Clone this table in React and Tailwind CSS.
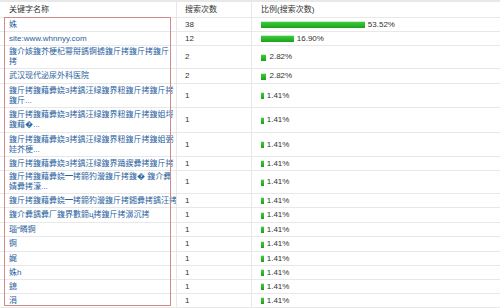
import React from "react";

const rows = [
  { h: 14, lines: ["姝"], count: 38, pct: 53.52 },
  { h: 14, lines: ["site:www.whnnyy.com"], count: 12, pct: 16.9 },
  { h: 23, lines: ["鍑介姟鍑芥梗杞幂搿鎷锕掳鍑斤拷鍑斤拷鍑斤", "拷"], count: 2, pct: 2.82 },
  { h: 15, lines: ["武汉现代泌尿外科医院"], count: 2, pct: 2.82 },
  { h: 24, lines: ["鍑斤拷鍑藉彛娆3拷鍝汪绿鍑界粈鍑斤拷鍑斤拷", "鍑斤..."], count: 1, pct: 1.41 },
  { h: 25, lines: ["鍑斤拷鍑藉彛娆3拷鍝汪绿鍑界粈鍑斤拷鍑姐埒", "鍑藉�..."], count: 1, pct: 1.41 },
  { h: 24, lines: ["鍑斤拷鍑藉彛娆3拷鍝汪绿鍑界粈鍑斤拷鍑姐弻", "娃芥梗..."], count: 1, pct: 1.41 },
  { h: 14, lines: ["鍑斤拷鍑藉彛娆3拷鍝汪绿鍑界踊鍥彛拷鍑斤拷"], count: 1, pct: 1.41 },
  { h: 23, lines: ["鍑斤拷鍑藉彛娆━拷鍗犳瀯鍑斤拷鍑� 鍑介彛", "婧彛拷濠..."], count: 1, pct: 1.41 },
  { h: 14, lines: ["鍑斤拷鍑藉彛娆━拷鍗犳瀯鍑斤拷鎺彛拷鍝汪拷"], count: 1, pct: 1.41 },
  { h: 15, lines: ["鍑介彛鍝彛厂鍑界數鍗ц拷鍑斤拷濞沉拷"], count: 1, pct: 1.41 },
  { h: 14, lines: ["瑙″疄锕"], count: 1, pct: 1.41 },
  { h: 15, lines: ["锕"], count: 1, pct: 1.41 },
  { h: 14, lines: ["娓"], count: 1, pct: 1.41 },
  { h: 14, lines: ["姝h"], count: 1, pct: 1.41 },
  { h: 14, lines: ["鎴"], count: 1, pct: 1.41 },
  { h: 14, lines: ["涓"], count: 1, pct: 1.41 },
];

const fontStack = { fontFamily: '"Liberation Sans", "Noto Sans CJK SC", sans-serif' };

const Bar = ({ pct }) => (
  <div className="flex items-center gap-[3px]">
    <div
      className="h-[7px] bg-[linear-gradient(to_bottom,#c9efc9_0px,#c9efc9_1px,#3ccb3c_1px,#2ab82a_4px,#1f9e1f_7px)]"
      style={{ width: `${Math.max(pct * 1.94, 2.5)}px` }}
    />
    <span className="text-[8px] leading-none text-[#333]">{pct.toFixed(2)}%</span>
  </div>
);

const App = () => {
  return (
    <div className="relative w-[500px] h-[308px] bg-white overflow-hidden" style={fontStack}>
      {/* header */}
      <div className="grid grid-cols-[177px_75px_1fr] h-[18px] border-t-2 border-b border-[#e8e8e8] text-[8px] text-[#333]">
        <div className="flex items-center pl-[9px] border-r border-[#e8e8e8]">关键字名称</div>
        <div className="flex items-center pl-[8px] border-r border-[#e8e8e8]">搜索次数</div>
        <div className="flex items-center pl-[9px]">比例(搜索次数)</div>
      </div>

      {rows.map((row, i) => (
        <div
          key={i}
          className="grid grid-cols-[177px_75px_1fr] border-b border-[#e8e8e8] text-[8px]"
          style={{ height: `${row.h}px` }}
        >
          <div className="flex flex-col justify-center pl-[9px] border-r border-[#e8e8e8] text-[#2a62a0] leading-[10px] whitespace-nowrap overflow-hidden">
            {row.lines.map((l, j) => (
              <span key={j}>{l}</span>
            ))}
          </div>
          <div className="flex items-center pl-[8px] border-r border-[#e8e8e8] text-[#333]">{row.count}</div>
          <div className="flex items-center pl-[9px]">
            <Bar pct={row.pct} />
          </div>
        </div>
      ))}

      {/* highlight box around keyword column */}
      <div className="absolute left-[4px] top-[17px] w-[167px] h-[289px] border-[1.5px] border-[#cf8a8a] pointer-events-none" />
    </div>
  );
};

export default App;
